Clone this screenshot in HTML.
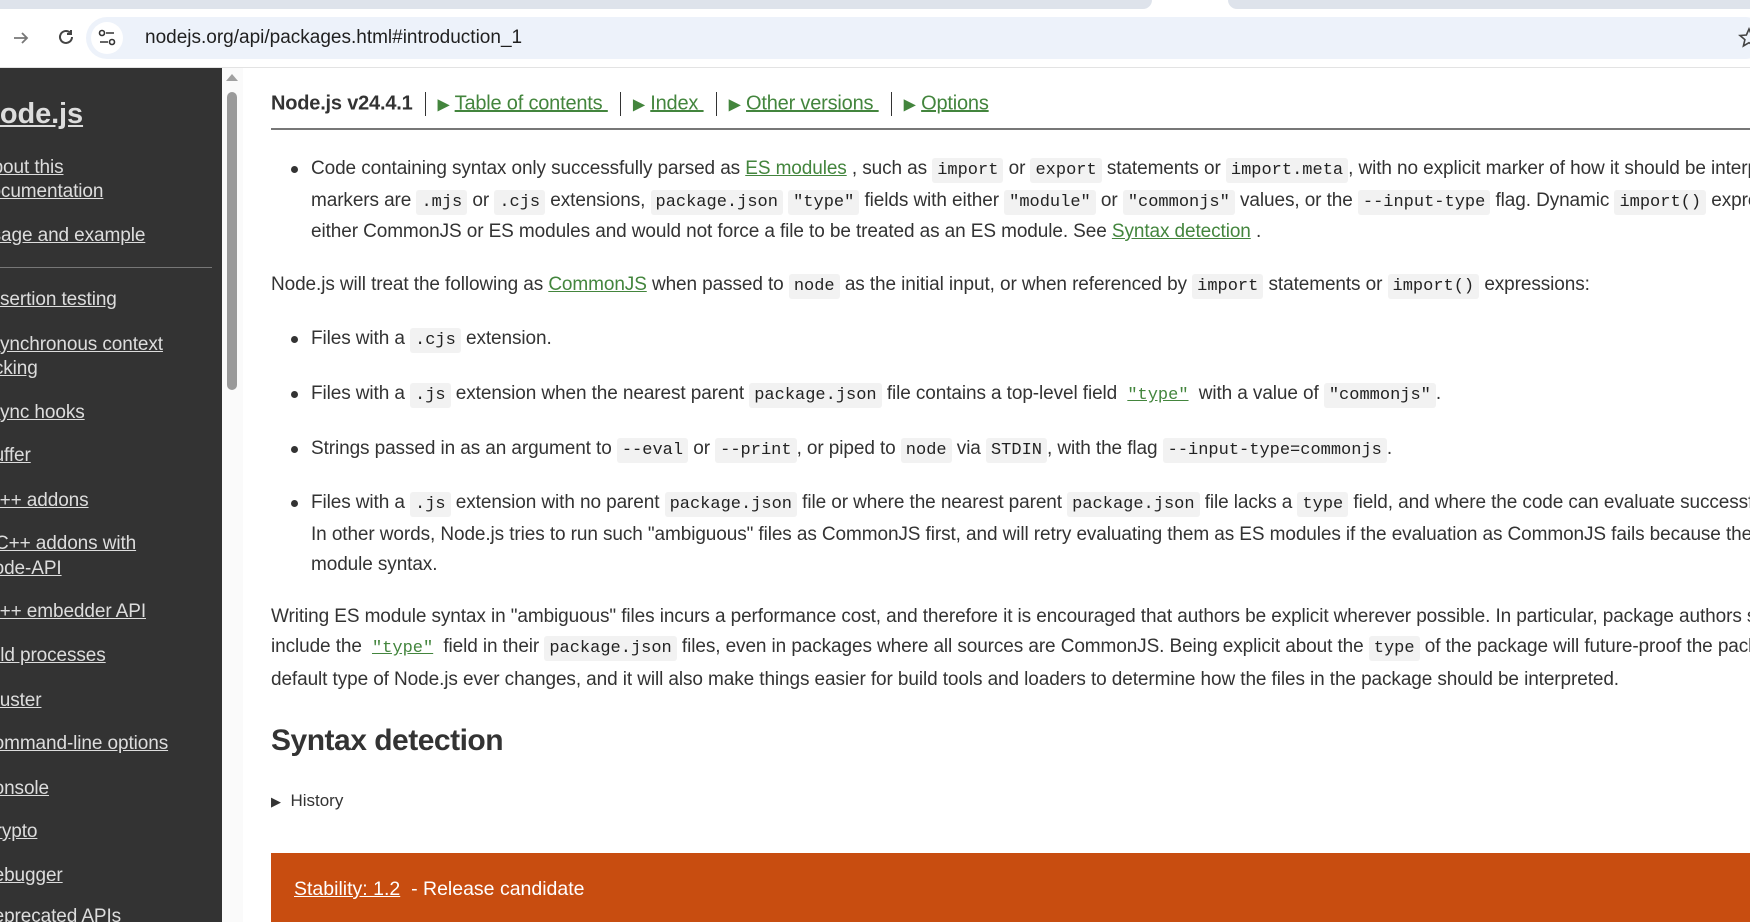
<!DOCTYPE html>
<html><head><meta charset="utf-8"><style>
*{margin:0;padding:0;box-sizing:border-box}
html,body{width:1750px;height:922px;overflow:hidden}
body{background:#fff;font-family:"Liberation Sans",sans-serif;position:relative;color:#333}
.clip{position:absolute;left:0;top:0;width:1750px;height:922px;overflow:hidden}
.tabbar{position:absolute;left:0;top:0;width:1750px;height:10px;background:#fff}
.tab1{position:absolute;left:0;top:0;width:1152px;height:9px;background:#dee3eb;border-radius:0 0 12px 0}
.tab2{position:absolute;left:1228px;top:0;width:522px;height:9px;background:#dee3eb;border-radius:0 0 0 12px}
.addr{position:absolute;left:0;top:10px;width:1750px;height:57px;background:#fff}
.omni{position:absolute;left:86px;top:17px;width:1680px;height:42px;background:#edf2fa;border-radius:21px}
.url{position:absolute;left:145px;top:27px;font-size:19px;color:#1f1f1f}
.sep{position:absolute;left:0;top:67px;width:1750px;height:1px;background:#e3e3e3}
.side{position:absolute;left:0;top:68px;width:222px;height:854px;background:#333;overflow:hidden}
.side a{position:absolute;left:-21px;color:#ddd;font-size:19px;text-decoration:underline;white-space:nowrap;line-height:24px;letter-spacing:-0.1px}
.side .logo{font-size:29px;font-weight:bold;line-height:34px}
.side .hr{position:absolute;left:0;width:212px;height:1px;background:#777}
.sb{position:absolute;left:222px;top:68px;width:21px;height:854px;background:#fafafa}
.thumb{position:absolute;left:227px;top:92px;width:10px;height:298px;background:#9a9a9a;border-radius:5px}
.arr{position:absolute;left:226px;top:74px;width:0;height:0;border-left:6px solid transparent;border-right:6px solid transparent;border-bottom:7px solid #a0a0a0}
.l{position:absolute;left:271px;white-space:nowrap;font-size:19px;line-height:32px;color:#333;letter-spacing:-0.1px}
.b{left:311px}
.dot{position:absolute;left:291px;width:7px;height:7px;border-radius:50%;background:#333}
code{font-family:"Liberation Mono",monospace;font-size:17px;background:#f2f2f2;padding:3px 5px;border-radius:3px;color:#222;letter-spacing:0}
a.g{color:#43853d;text-decoration:underline}
.hdr{position:absolute;top:92px;left:271px;font-size:20px;white-space:nowrap;color:#333;letter-spacing:-0.2px}
.hdr b{font-weight:bold}
.hdr .s{display:inline-block;width:1px;height:24px;background:#333;vertical-align:middle;margin:0 12px}
.hdr .t{color:#43853d;font-size:16px}
.hr2{position:absolute;left:271px;top:128px;width:1479px;height:2px;background:#777}
h2{position:absolute;left:271px;top:724px;font-size:30px;font-weight:bold;color:#333;white-space:nowrap;letter-spacing:-0.5px}
.hist{position:absolute;left:271px;top:791px;font-size:17px;color:#333}
.stab{position:absolute;left:271px;top:853px;width:1479px;height:69px;background:#c84d10}
.stab span{position:absolute;left:23px;top:25px;color:#fff;font-size:19.5px;white-space:nowrap}
</style></head><body><div class="clip">
<div class="tabbar"><div class="tab1"></div><div class="tab2"></div></div>
<div class="addr">
<svg style="position:absolute;left:11px;top:18px" width="20" height="20" viewBox="0 0 20 20"><path d="M3 10h13M11 5l5 5-5 5" stroke="#777" stroke-width="1.8" fill="none"/></svg>
<svg style="position:absolute;left:56px;top:17px" width="20" height="20" viewBox="0 0 20 20"><path d="M16 10a6 6 0 1 1-2-4.5" stroke="#444" stroke-width="2" fill="none"/><path d="M15 3v4h-4" stroke="#444" stroke-width="2" fill="none"/></svg>
</div>
<div class="omni"><div style="position:absolute;left:5px;top:5px;width:32px;height:32px;border-radius:16px;background:#fff"></div>
<svg style="position:absolute;left:12px;top:12px" width="18" height="18" viewBox="0 0 18 18"><circle cx="4" cy="4" r="2.5" stroke="#333" stroke-width="1.6" fill="none"/><path d="M8 4h8M2 13h8" stroke="#333" stroke-width="1.6"/><circle cx="14" cy="13" r="2.5" stroke="#333" stroke-width="1.6" fill="none"/></svg>
<svg style="position:absolute;left:1652px;top:10px" width="22" height="22" viewBox="0 0 22 22"><path d="M11 2l2.6 6 6.4.5-4.9 4.2 1.5 6.3L11 15.7 5.4 19l1.5-6.3L2 8.5 8.4 8z" stroke="#444" stroke-width="1.6" fill="none"/></svg>
</div>
<div class="url">nodejs.org/api/packages.html#introduction_1</div>
<div class="sep"></div>

<div class="side">
<a class="logo" style="top:29px">Node.js</a>
<a style="top:88px;left:-20px">About this</a>
<a style="top:112px;left:-20px">documentation</a>
<a style="top:156px;left:-22px">Usage and example</a>
<div class="hr" style="top:199px"></div>
<a style="top:220px;left:-22px">Assertion testing</a>
<a style="top:265px;left:-22px">Asynchronous context</a>
<a style="top:289px;left:-28px">tracking</a>
<a style="top:333px;left:-22px">Async hooks</a>
<a style="top:376px;left:-19px">Buffer</a>
<a style="top:421px;left:-14px">C++ addons</a>
<a style="top:464px;left:-5px">C++ addons with</a>
<a style="top:489px;left:-20px">Node-API</a>
<a style="top:532px;left:-14px">C++ embedder API</a>
<a style="top:576px;left:-28px">Child processes</a>
<a style="top:621px;left:-18px">Cluster</a>
<a style="top:664px;left:-20px">Command-line options</a>
<a style="top:709px;left:-20px">Console</a>
<a style="top:752px;left:-18px">Crypto</a>
<a style="top:796px;left:-20px">Debugger</a>
<a style="top:837px;left:-20px">Deprecated APIs</a>
</div>
<div class="sb"></div><div class="arr"></div><div class="thumb"></div>

<div class="hdr"><b>Node.js v24.4.1</b><span class="s"></span><span class="t">▶</span> <a class="g">Table of contents </a><span class="s"></span><span class="t">▶</span> <a class="g">Index </a><span class="s"></span><span class="t">▶</span> <a class="g">Other versions </a><span class="s"></span><span class="t">▶</span> <a class="g">Options</a></div>
<div class="hr2"></div>

<div class="dot" style="top:166px"></div>
<div class="l b" style="top:153px">Code containing syntax only successfully parsed as <a class="g">ES modules</a> , such as <code>import</code> or <code>export</code> statements or <code>import.meta</code>, with no explicit marker of how it should be interpreted. Explicit</div>
<div class="l b" style="top:185px">markers are <code>.mjs</code> or <code>.cjs</code> extensions, <code>package.json</code> <code>"type"</code> fields with either <code>"module"</code> or <code>"commonjs"</code> values, or the <code>--input-type</code> flag. Dynamic <code>import()</code> expressions are supported in</div>
<div class="l b" style="top:216px">either CommonJS or ES modules and would not force a file to be treated as an ES module. See <a class="g">Syntax detection</a> .</div>

<div class="l" style="top:269px">Node.js will treat the following as <a class="g">CommonJS</a> when passed to <code>node</code> as the initial input, or when referenced by <code>import</code> statements or <code>import()</code> expressions:</div>

<div class="dot" style="top:336px"></div>
<div class="l b" style="top:323px">Files with a <code>.cjs</code> extension.</div>
<div class="dot" style="top:391px"></div>
<div class="l b" style="top:378px">Files with a <code>.js</code> extension when the nearest parent <code>package.json</code> file contains a top-level field <a class="g"><code style="background:none;color:#43853d">"type"</code></a> with a value of <code>"commonjs"</code>.</div>
<div class="dot" style="top:446px"></div>
<div class="l b" style="top:433px">Strings passed in as an argument to <code>--eval</code> or <code>--print</code>, or piped to <code>node</code> via <code>STDIN</code>, with the flag <code>--input-type=commonjs</code>.</div>
<div class="dot" style="top:500px"></div>
<div class="l b" style="top:487px">Files with a <code>.js</code> extension with no parent <code>package.json</code> file or where the nearest parent <code>package.json</code> file lacks a <code>type</code> field, and where the code can evaluate successfully as CommonJS.</div>
<div class="l b" style="top:519px">In other words, Node.js tries to run such "ambiguous" files as CommonJS first, and will retry evaluating them as ES modules if the evaluation as CommonJS fails because the parser found ES</div>
<div class="l b" style="top:549px">module syntax.</div>

<div class="l" style="top:601px">Writing ES module syntax in "ambiguous" files incurs a performance cost, and therefore it is encouraged that authors be explicit wherever possible. In particular, package authors should always</div>
<div class="l" style="top:631px">include the <a class="g"><code style="background:none;color:#43853d">"type"</code></a> field in their <code>package.json</code> files, even in packages where all sources are CommonJS. Being explicit about the <code>type</code> of the package will future-proof the package in case the</div>
<div class="l" style="top:664px">default type of Node.js ever changes, and it will also make things easier for build tools and loaders to determine how the files in the package should be interpreted.</div>

<h2>Syntax detection</h2>
<div class="hist"><span style="font-size:13px">▶</span>&nbsp; History</div>
<div class="stab"><span><u>Stability: 1.2</u> &nbsp;- Release candidate</span></div>
</div></body></html>
